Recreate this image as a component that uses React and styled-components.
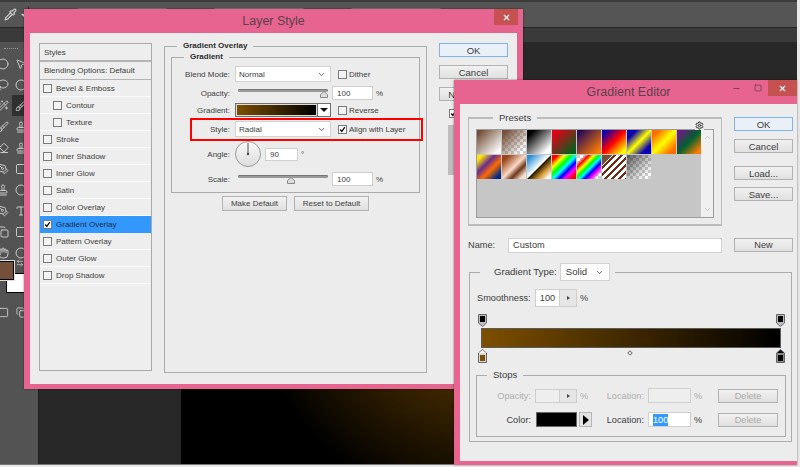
import React from "react";
import styled, { createGlobalStyle } from "styled-components";
import {
    Brush, Circle, Eraser, Hand, Lasso, MousePointer2, PenTool, Pipette,
    Settings, Square, Stamp, Type, Wand2, X, Minus, ChevronDown, ChevronUp, Copy,
    ArrowLeftRight,
} from "lucide-react";

const GlobalStyle = createGlobalStyle`
    html, body {
        margin: 0;
        padding: 0;
        background: #e9e9e9;
        overflow: hidden;
    }
    * {
        box-sizing: border-box;
    }
`

const PINK = "#e6648f";
const TEXT = "#3d3d3d";

const Screen = styled.div`
    position: relative;
    width: 800px;
    height: 467px;
    overflow: hidden;
    font-family: "Liberation Sans", Arial, sans-serif;
    font-size: 8px;
    color: ${TEXT};
`

/* photoshop behind the dialogs */
const Photoshop = styled.div`
    width: 797px;
    height: 465px;
    display: flex;
    flex-direction: column;
    background: #282828;
    border-bottom: 1px solid #777;
`

const OptionsBar = styled.div`
    height: 28px;
    flex-shrink: 0;
    display: flex;
    align-items: flex-start;
    padding: 6px 0 0 4px;
    background: #555;
    border-top: 2px solid #3c3c3c;
    border-bottom: 1px solid #262626;
    color: #d0d0d0;
`

const OptionCaret = styled.div`
    margin: 6px 0 0 4px;
    border-left: 3px solid transparent;
    border-right: 3px solid transparent;
    border-top: 3px solid #e0e0e0;
`

const OptionSeparator = styled.div`
    width: 1px;
    height: 6px;
    margin: -2px 0 0 1px;
    background: #2e2e2e;
`

const OptionField = styled.div`
    width: ${props => props.$w}px;
    margin-left: ${props => props.$ml}px;
    height: 14px;
    border: 1px solid #7d7d7d;
    border-radius: 3px;
`

const TabStrip = styled.div`
    height: 14px;
    flex-shrink: 0;
    background: #3a3a3a;
`

const Workspace = styled.div`
    flex: 1;
    display: flex;
`

const ToolPanel = styled.div`
    position: relative;
    width: 39px;
    flex-shrink: 0;
    background: #535353;
    border-right: 1px solid #1e1e1e;
    padding-top: 6px;
    overflow: hidden;
`

const Grabber = styled.div`
    width: 14px;
    height: 1px;
    margin-left: 4px;
    border-top: 1px dotted #999;
`

const ToolGrid = styled.div`
    display: grid;
    grid-template-columns: 18px 18px;
    grid-auto-rows: 21px;
    margin: 4px 0 0 -6px;
    color: #c8c8c8;
`

const ToolSlot = styled.div`
    display: flex;
    align-items: center;
    justify-content: center;
    background: ${props => props.$active ? "#2f2f2f" : "transparent"};
`

const SwapIcon = styled.div`
    position: absolute;
    left: 16px;
    top: 217px;
    display: flex;
    color: #d0d0d0;
`

const Foreground = styled.div`
    position: absolute;
    left: -3px;
    top: 219px;
    z-index: 1;
    width: 17px;
    height: 19px;
    background: #74503a;
    border: 1px solid #000;
    outline: 1px solid #ddd;
`

const Background = styled.div`
    position: absolute;
    left: 6px;
    top: 231px;
    width: 20px;
    height: 20px;
    background: #fff;
    border: 1px solid #000;
`

const ModeGrid = styled(ToolGrid)`
    margin-top: 39px;
`

const DocArea = styled.div`
    flex: 1;
    padding: 40px 0 0 142px;
    display: flex;
`

const Canvas = styled.div`
    flex: 1;
    background: radial-gradient(circle 240px at 308px 191px, #7d4f00 0%, #000 100%);
`

/* dialog chrome */
const Dialog = styled.div`
    position: absolute;
    display: flex;
    flex-direction: column;
    background: ${PINK};
    box-shadow: 0 0 2px rgba(0, 0, 0, 0.5);
`

const LayerStyleDialog = styled(Dialog)`
    left: 24px;
    top: 9px;
    width: 499px;
    height: 380px;
    padding: 0 6px 5px;
`

const GradientDialog = styled(Dialog)`
    left: 454px;
    top: 80px;
    width: 343px;
    height: 385px;
    padding: 0 0 4px 6px;
`

const TitleBar = styled.div`
    position: relative;
    height: 24px;
    flex-shrink: 0;
    display: flex;
    align-items: center;
    justify-content: center;
    font-size: 12.5px;
    color: #5f3f4c;
`

const WindowButtons = styled.div`
    position: absolute;
    right: ${props => props.$right}px;
    top: 0;
    display: flex;
    align-items: flex-start;
`

const CloseButton = styled.div`
    width: ${props => props.$w}px;
    height: 16px;
    display: flex;
    align-items: center;
    justify-content: center;
    background: #c75050;
    color: #fff;
`

const WindowGlyph = styled.div`
    width: 21px;
    height: 16px;
    display: flex;
    align-items: center;
    justify-content: center;
    color: #5c3a48;
`

const LayerBody = styled.div`
    flex: 1;
    display: flex;
    align-items: flex-start;
    padding-left: 9px;
    gap: 12px;
    background: #ececec;
`

/* styles list */
const StylesPanel = styled.div`
    width: 113px;
    height: 328px;
    margin-top: 10px;
    flex-shrink: 0;
    border: 1px solid #a9a9a9;
    background: #eeeeee;
`

const StylesHeader = styled.div`
    height: 18px;
    line-height: 17px;
    padding-left: 4px;
    border-bottom: 2px solid #b5b5b5;
`

const BlendingRow = styled.div`
    height: 18px;
    line-height: 17px;
    padding-left: 4px;
    border-bottom: 1px solid #b5b5b5;
`

const StyleRow = styled.div`
    height: 17px;
    display: flex;
    align-items: center;
    gap: 4px;
    padding-left: ${props => props.$indent ? 13 : 3}px;
    background: ${props => props.$selected ? "#3398fe" : "transparent"};
    border-bottom: 1px solid ${props => props.$selected ? "#3398fe" : "#fbfbfb"};
    color: ${props => props.$selected ? "#1c2c44" : TEXT};
`

const CheckBox = styled.div`
    width: 9px;
    height: 9px;
    flex-shrink: 0;
    display: flex;
    align-items: center;
    justify-content: center;
    background: ${props => props.$bare ? "#f3f3f3" : "#fff"};
    border: 1px solid #7a7a7a;
`

const Tick = () => (
    <svg width="9" height="9" viewBox="0 0 9 9">
        <path d="M1.5 4.5 L3.6 7 L7.5 1.5" fill="none" stroke="#111" strokeWidth="1.7" />
    </svg>
);

/* gradient overlay pane */
const EffectPane = styled.div`
    width: 263px;
    flex-shrink: 0;
    margin-top: 8px;
`

const GroupBox = styled.fieldset`
    margin: 0;
    min-width: 0;
    border: 1px solid #acacac;
`

const GroupTitle = styled.legend`
    height: 10px;
    line-height: 10px;
    padding: 0 6px;
    font-weight: ${props => props.$plain ? 400 : 700};
    color: ${props => props.$plain ? TEXT : "#2c2c2c"};
`

const OuterGroup = styled(GroupBox)`
    height: 332px;
    padding: 0 6px;
    > ${GroupTitle} {
        margin-left: 6px;
    }
`

const InnerGroup = styled(GroupBox)`
    margin-top: 1px;
    padding: 0 0 6px;
    > ${GroupTitle} {
        margin-left: 12px;
    }
`

const FormRow = styled.div`
    position: relative;
    display: flex;
    align-items: center;
    height: ${props => props.$h}px;
    margin-top: ${props => props.$mt}px;
`

const FormLabel = styled.div`
    width: 59px;
    padding-right: 1px;
    flex-shrink: 0;
    text-align: right;
`

const SelectBox = styled.div`
    width: ${props => props.$w || 96}px;
    height: ${props => props.$h || 16}px;
    margin-left: 4px;
    flex-shrink: 0;
    display: flex;
    align-items: center;
    justify-content: space-between;
    padding: 0 4px 0 3px;
    background: #fff;
    border: 1px solid #d2d2d2;
`

const SideOption = styled.div`
    display: flex;
    align-items: center;
    gap: 2px;
    margin-left: 7px;
`

const SliderTrack = styled.div`
    position: relative;
    width: 90px;
    height: 3px;
    margin: 0 3px 6px 7px;
    flex-shrink: 0;
    background: #9a9a9a;
    border-radius: 2px;
    box-shadow: inset 0 1px 0 #777;
`

const SliderThumb = styled.svg`
    position: absolute;
    top: 2px;
    left: ${props => props.$pos}%;
    margin-left: -4px;
`

const NumberInput = styled.div`
    width: ${props => props.$w}px;
    height: ${props => props.$h || 14}px;
    margin-left: ${props => props.$ml || 0}px;
    flex-shrink: 0;
    display: flex;
    align-items: center;
    padding-left: 4px;
    background: #fff;
    border: 1px solid #d0d0d0;
`

const Unit = styled.span`
    margin-left: 3px;
    color: ${props => props.$muted ? "#aaa" : TEXT};
`

const GradientField = styled.div`
    width: 96px;
    height: 14px;
    margin-left: 4px;
    flex-shrink: 0;
    display: flex;
    border: 1px solid #6f6f6f;
    background: #fff;
`

const GradientPreview = styled.div`
    flex: 1;
    background: linear-gradient(90deg, #7d4f00, #000);
    border: 1px solid #ddd;
`

const GradientArrow = styled.div`
    width: 13px;
    display: flex;
    align-items: center;
    justify-content: center;
    border-left: 1px solid #6f6f6f;
    &::after {
        content: "";
        border-left: 4px solid transparent;
        border-right: 4px solid transparent;
        border-top: 4px solid #111;
    }
`

const RedMark = styled.div`
    position: absolute;
    left: 18px;
    top: -3px;
    width: 233px;
    height: 23px;
    border: 2px solid #f00;
    pointer-events: none;
`

const AngleDial = styled.svg`
    margin-left: 4px;
    flex-shrink: 0;
`

const PaneButtons = styled.div`
    display: flex;
    justify-content: center;
    gap: 7px;
    margin-top: 3px;
`

const Button = styled.div`
    width: ${props => props.$w}px;
    height: ${props => props.$h || 14}px;
    flex-shrink: 0;
    display: flex;
    align-items: center;
    justify-content: center;
    background: ${props => props.$primary ? "#eaf0f7" : "linear-gradient(#f1f1f1, #e0e0e0)"};
    border: 1px solid ${props => props.$primary ? "#7fb4e8" : "#b2b2b2"};
    color: ${props => props.$disabled ? "#a9a9a9" : TEXT};
    font-size: inherit;
`

const ActionColumn = styled.div`
    width: 69px;
    margin-top: 10px;
    flex-shrink: 0;
    display: flex;
    flex-direction: column;
    gap: 8px;
    font-size: 9.5px;
`

const PreviewCheck = styled(CheckBox)`
    margin: 0 0 0 10px;
`

const PreviewBox = styled.div`
    width: 20px;
    height: 50px;
    margin: -1px 0 0 9px;
    background: #bdbdbd;
`

/* gradient editor */
const EditorBody = styled.div`
    flex: 1;
    padding: 9px 0 0 8px;
    background: #ececec;
    font-size: 9.2px;
`

const PresetLine = styled.div`
    display: flex;
    align-items: flex-start;
    gap: 12px;
`

const PresetGroup = styled(GroupBox)`
    position: relative;
    width: 254px;
    height: 113px;
    padding: 6px 7px 0;
    border-width: 2px 1px 2px 1px;
    border-color: #bcbcbc;
    > ${GroupTitle} {
        margin-left: 17px;
        font-size: 9.5px;
    }
`

const GearIcon = styled.div`
    position: absolute;
    right: 17px;
    top: -2px;
    display: flex;
    background: #ececec;
    color: #222;
`

const SwatchBox = styled.div`
    display: flex;
    width: 238px;
    height: 89px;
    background: #c6c6c6;
    border: 1px solid #9d9d9d;
`

const SwatchGrid = styled.div`
    width: 224px;
    display: grid;
    grid-template-columns: repeat(9, 24px);
    grid-auto-rows: 24px;
    gap: 1px;
    align-content: start;
`

const Swatch = styled.div`
    background: ${props => props.$fill};
`

const SwatchScroll = styled.div`
    flex: 1;
    display: flex;
    flex-direction: column;
    justify-content: space-between;
    align-items: center;
    padding: 3px 0;
    background: #f0f0f0;
    color: #b5b5b5;
`

const EditorActions = styled.div`
    width: 59px;
    margin-top: 4px;
    flex-shrink: 0;
    font-size: 9.5px;
    display: flex;
    flex-direction: column;
`

const ActionGap = styled.div`
    height: ${props => props.$h}px;
`

const NameRow = styled.div`
    display: flex;
    align-items: center;
    margin-top: 12px;
    height: 14px;
`

const NameLabel = styled.div`
    width: 40px;
`

const NameInput = styled.div`
    width: 214px;
    height: 15px;
    margin-right: 12px;
    padding-left: 4px;
    line-height: 13px;
    background: #fff;
    border: 1px solid #d2d2d2;
`

const TypeGroup = styled(GroupBox)`
    width: 323px;
    height: 177px;
    margin: 13px 0 0 1px;
    padding: 10px 0 0 7px;
    > ${GroupTitle} {
        display: flex;
        align-items: center;
        height: 14px;
        margin-left: 3px;
        padding: 0 5px 0 14px;
        font-size: 9.6px;
    }
`

const TypeSelect = styled(SelectBox)`
    width: 50px;
    height: 18px;
    margin-left: 3px;
    padding: 0 5px;
`

const SmoothRow = styled.div`
    display: flex;
    align-items: center;
    height: 18px;
`

const SmoothLabel = styled.div`
    width: 58px;
`

const Stepper = styled.div`
    width: 42px;
    height: ${props => props.$h}px;
    flex-shrink: 0;
    display: flex;
    background: ${props => props.$disabled ? "#eee" : "#fff"};
    border: 1px solid #cfcfcf;
`

const StepValue = styled.div`
    width: 23px;
    display: flex;
    align-items: center;
    justify-content: center;
`

const StepArrow = styled.div`
    flex: 1;
    display: flex;
    align-items: center;
    justify-content: center;
    background: #e6e6e6;
    border-left: 1px solid #cfcfcf;
    &::after {
        content: "";
        border-top: 2px solid transparent;
        border-bottom: 2px solid transparent;
        border-left: 3px solid #444;
    }
`

const RampArea = styled.div`
    position: relative;
    width: 300px;
    height: 50px;
    margin: 6px 0 0 4px;
    padding-top: 15px;
`

const Ramp = styled.div`
    height: 20px;
    background: linear-gradient(90deg, #7d4f00, #000);
    border: 1px solid #5a5a5a;
`

const StopMarker = styled.svg`
    position: absolute;
    left: ${props => props.$left}px;
    top: ${props => props.$top}px;
`

const MidPoint = styled.div`
    position: absolute;
    left: 147px;
    top: 38px;
    width: 4px;
    height: 4px;
    transform: rotate(45deg);
    border: 1px solid #777;
    background: #f4f4f4;
`

const StopsGroup = styled(GroupBox)`
    width: 310px;
    height: 67px;
    margin: 7px 0 0 -1px;
    padding: 8px 0 0;
    > ${GroupTitle} {
        margin-left: 10px;
        font-size: 9.5px;
    }
`

const StopRow = styled.div`
    display: grid;
    grid-template-columns: 58px 42px 28px 43px 43px 27px 60px;
    align-items: center;
    height: ${props => props.$h}px;
    margin-top: ${props => props.$mt || 0}px;
    color: ${props => props.$disabled ? "#adadad" : TEXT};
`

const StopLabel = styled.div`
    padding-right: 4px;
    text-align: right;
`

const ColorChip = styled.div`
    width: 41px;
    height: 15px;
    margin-left: 1px;
    background: #000;
    border: 1px solid #666;
`

const ColorArrow = styled.div`
    width: 13px;
    height: 15px;
    margin-left: 2px;
    display: flex;
    align-items: center;
    justify-content: center;
    background: #e4e4e4;
    border: 1px solid #b5b5b5;
    &::after {
        content: "";
        border-top: 5px solid transparent;
        border-bottom: 5px solid transparent;
        border-left: 6px solid #000;
    }
`

const LocationInput = styled(NumberInput)`
    width: 43px;
    height: 15px;
    padding-left: 4px;
    background: ${props => props.$disabled ? "#eee" : "#fff"};
`

const Selected = styled.span`
    background: #3399ff;
    color: #fff;
    padding: 1px 0;
`

const UnitCell = styled.div`
    padding-left: 3px;
`

const SmallChevron = () => <ChevronDown size={9} strokeWidth={2} color="#333" />;

const styleRows = [
    { label: "Bevel & Emboss" },
    { label: "Contour", indent: true },
    { label: "Texture", indent: true },
    { label: "Stroke" },
    { label: "Inner Shadow" },
    { label: "Inner Glow" },
    { label: "Satin" },
    { label: "Color Overlay" },
    { label: "Gradient Overlay", selected: true },
    { label: "Pattern Overlay" },
    { label: "Outer Glow" },
    { label: "Drop Shadow" },
];

const CHECKER = "repeating-conic-gradient(#fff 0 25%, #cfcfcf 0 50%) 0 0 / 6px 6px";

const presets = [
    { fill: "linear-gradient(135deg, #74503a 10%, #fff 90%)" },
    { fill: `linear-gradient(135deg, #74503a 10%, rgba(116, 80, 58, 0) 85%), ${CHECKER}` },
    { fill: "linear-gradient(135deg, #000 15%, #fff 85%)" },
    { fill: "linear-gradient(135deg, #e60019 10%, #00601b 90%)" },
    { fill: "linear-gradient(135deg, #290a59 10%, #ff7c00 90%)" },
    { fill: "linear-gradient(135deg, #0a00b2 10%, #ff0000 50%, #ffff00 90%)" },
    { fill: "linear-gradient(135deg, #0a00b2 20%, #ffff00 50%, #0a00b2 80%)" },
    { fill: "linear-gradient(135deg, #ff6e02 15%, #ffff00 50%, #ff6d00 85%)" },
    { fill: "linear-gradient(135deg, #6d1a80 10%, #00602f 50%, #ff7c00 90%)" },
    { fill: "linear-gradient(135deg, #fee400 12%, #6b2d8f 38%, #ff6c00 60%, #002a7f 88%)" },
    { fill: "linear-gradient(135deg, #97461a 15%, #fbd8c5 50%, #6d391a 68%, #f6e0d0 88%)" },
    { fill: "linear-gradient(135deg, #2a8fd8 10%, #fff 48%, #2a1a00 52%, #d49a30 72%, #fff 92%)" },
    { fill: "linear-gradient(135deg, #f00 12%, #ff0 26%, #0f0 40%, #0ff 52%, #00f 64%, #f0f 76%, #f00 90%)" },
    { fill: `linear-gradient(135deg, transparent 15%, #f00 25%, #ff0 36%, #0f0 46%, #0ff 55%, #00f 65%, #f0f 76%, transparent 88%), ${CHECKER}` },
    { fill: `linear-gradient(135deg, #74503a 0 22%, transparent 22%), repeating-linear-gradient(135deg, #fff 0 3px, #6b2f17 3px 5px)` },
    { fill: `linear-gradient(135deg, rgba(0, 0, 0, 0.55) 10%, rgba(0, 0, 0, 0) 85%), ${CHECKER}` },
];

const tools = [
    [Circle, MousePointer2],
    [Lasso, Circle],
    [Wand2, Brush],
    [Brush, Stamp],
    [Eraser, Stamp],
    [PenTool, Square],
    [Stamp, Circle],
    [PenTool, Type],
    [Copy, Square],
    [Hand, Circle],
];

const OpacityStop = ({ left }) => (
    <StopMarker $left={left} $top={1} width="9" height="13" viewBox="0 0 9 13">
        <path d="M0.5 0.5 H8.5 V9 L4.5 12.5 L0.5 9 Z" fill="#bdbdbd" stroke="#666" />
        <rect x="2" y="2" width="5" height="6" fill="#000" />
    </StopMarker>
);

const ColorStop = ({ left, color, active }) => (
    <StopMarker $left={left} $top={36} width="9" height="14" viewBox="0 0 9 14">
        <path d="M4.5 0.5 L8.5 4 V13.5 H0.5 V4 Z" fill={active ? "#8a8a8a" : "#d8d8d8"} stroke="#666" />
        <path d="M4.5 1 L8 4 H1 Z" fill={active ? "#000" : "#f8f8f8"} />
        <rect x="2" y="6" width="5" height="6" fill={color} />
    </StopMarker>
);

const App = () => {
    return (
        <Screen>
            <GlobalStyle />
            <Photoshop>
                <OptionsBar>
                    <Pipette size={13} color="#d6d6d6" />
                    <OptionCaret />
                    <OptionSeparator />
                    <OptionField $w={92} $ml={47} />
                    <OptionField $w={92} $ml={45} />
                    <OptionField $w={92} $ml={45} />
                </OptionsBar>
                <TabStrip />
                <Workspace>
                    <ToolPanel>
                        <Grabber />
                        <ToolGrid>
                            {tools.flat().map((Icon, i) => (
                                <ToolSlot key={i} $active={i === 5}>
                                    <Icon size={12} strokeWidth={2} />
                                </ToolSlot>
                            ))}
                        </ToolGrid>
                        <SwapIcon><ArrowLeftRight size={8} strokeWidth={2} /></SwapIcon>
                        <Foreground />
                        <Background />
                        <ModeGrid>
                            <ToolSlot><Square size={11} strokeWidth={2} /></ToolSlot>
                            <ToolSlot><Copy size={11} strokeWidth={2} /></ToolSlot>
                        </ModeGrid>
                    </ToolPanel>
                    <DocArea>
                        <Canvas />
                    </DocArea>
                </Workspace>
            </Photoshop>

            <LayerStyleDialog>
                <TitleBar>
                    Layer Style
                    <WindowButtons $right={-1}>
                        <CloseButton $w={24}>
                            <X size={9} strokeWidth={3} />
                        </CloseButton>
                    </WindowButtons>
                </TitleBar>
                <LayerBody>
                    <StylesPanel>
                        <StylesHeader>Styles</StylesHeader>
                        <BlendingRow>Blending Options: Default</BlendingRow>
                        {styleRows.map(row => (
                            <StyleRow key={row.label} $indent={row.indent} $selected={row.selected}>
                                <CheckBox $bare={!row.selected}>{row.selected && <Tick />}</CheckBox>
                                {row.label}
                            </StyleRow>
                        ))}
                    </StylesPanel>

                    <EffectPane>
                        <OuterGroup>
                            <GroupTitle>Gradient Overlay</GroupTitle>
                            <InnerGroup>
                                <GroupTitle>Gradient</GroupTitle>
                                <FormRow $h={16} $mt={4}>
                                    <FormLabel>Blend Mode:</FormLabel>
                                    <SelectBox>Normal <SmallChevron /></SelectBox>
                                    <SideOption>
                                        <CheckBox $bare />
                                        Dither
                                    </SideOption>
                                </FormRow>
                                <FormRow $h={14} $mt={4}>
                                    <FormLabel>Opacity:</FormLabel>
                                    <SliderTrack>
                                        <SliderThumb $pos={96} width="8" height="7" viewBox="0 0 8 7">
                                            <path d="M4 0.5 L7.5 3.5 V6.5 H0.5 V3.5 Z" fill="#ddd" stroke="#888" />
                                        </SliderThumb>
                                    </SliderTrack>
                                    <NumberInput $w={41} $ml={1}>100</NumberInput>
                                    <Unit>%</Unit>
                                </FormRow>
                                <FormRow $h={14} $mt={3}>
                                    <FormLabel>Gradient:</FormLabel>
                                    <GradientField>
                                        <GradientPreview />
                                        <GradientArrow />
                                    </GradientField>
                                    <SideOption>
                                        <CheckBox $bare />
                                        Reverse
                                    </SideOption>
                                </FormRow>
                                <FormRow $h={16} $mt={4}>
                                    <FormLabel>Style:</FormLabel>
                                    <SelectBox>Radial <SmallChevron /></SelectBox>
                                    <SideOption>
                                        <CheckBox><Tick /></CheckBox>
                                        Align with Layer
                                    </SideOption>
                                    <RedMark />
                                </FormRow>
                                <FormRow $h={26} $mt={4}>
                                    <FormLabel>Angle:</FormLabel>
                                    <AngleDial width="26" height="26" viewBox="0 0 26 26">
                                        <defs>
                                            <linearGradient id="dialFill" x1="0" y1="0" x2="0" y2="1">
                                                <stop offset="0" stopColor="#fafafa" />
                                                <stop offset="1" stopColor="#dcdcdc" />
                                            </linearGradient>
                                        </defs>
                                        <circle cx="13" cy="13" r="12.5" fill="url(#dialFill)" stroke="#9a9a9a" />
                                        <path d="M13 2 V13" stroke="#555" strokeWidth="1" />
                                        <circle cx="13" cy="13" r="1.2" fill="#444" />
                                    </AngleDial>
                                    <NumberInput $w={33} $h={13} $ml={4}>90</NumberInput>
                                    <Unit>°</Unit>
                                </FormRow>
                                <FormRow $h={14} $mt={5}>
                                    <FormLabel>Scale:</FormLabel>
                                    <SliderTrack>
                                        <SliderThumb $pos={59} width="8" height="7" viewBox="0 0 8 7">
                                            <path d="M4 0.5 L7.5 3.5 V6.5 H0.5 V3.5 Z" fill="#ddd" stroke="#888" />
                                        </SliderThumb>
                                    </SliderTrack>
                                    <NumberInput $w={41} $ml={1}>100</NumberInput>
                                    <Unit>%</Unit>
                                </FormRow>
                            </InnerGroup>
                            <PaneButtons>
                                <Button $w={65} $h={15}>Make Default</Button>
                                <Button $w={75} $h={15}>Reset to Default</Button>
                            </PaneButtons>
                        </OuterGroup>
                    </EffectPane>

                    <ActionColumn>
                        <Button $w={69} $primary>OK</Button>
                        <Button $w={69}>Cancel</Button>
                        <Button $w={69}>New Style...</Button>
                        <PreviewCheck><Tick /></PreviewCheck>
                        <PreviewBox />
                    </ActionColumn>
                </LayerBody>
            </LayerStyleDialog>

            <GradientDialog>
                <TitleBar>
                    Gradient Editor
                    <WindowButtons $right={0}>
                        <WindowGlyph><Minus size={9} strokeWidth={2} /></WindowGlyph>
                        <WindowGlyph><Square size={8} strokeWidth={2} /></WindowGlyph>
                        <CloseButton $w={29}>
                            <X size={9} strokeWidth={3} />
                        </CloseButton>
                    </WindowButtons>
                </TitleBar>
                <EditorBody>
                    <PresetLine>
                        <PresetGroup>
                            <GroupTitle $plain>Presets</GroupTitle>
                            <GearIcon><Settings size={9} strokeWidth={2.5} /></GearIcon>
                            <SwatchBox>
                                <SwatchGrid>
                                    {presets.map((p, i) => (
                                        <Swatch key={i} $fill={p.fill} />
                                    ))}
                                </SwatchGrid>
                                <SwatchScroll>
                                    <ChevronUp size={9} strokeWidth={2} />
                                    <ChevronDown size={9} strokeWidth={2} />
                                </SwatchScroll>
                            </SwatchBox>
                        </PresetGroup>
                        <EditorActions>
                            <Button $w={59} $primary>OK</Button>
                            <ActionGap $h={8} />
                            <Button $w={59}>Cancel</Button>
                            <ActionGap $h={13} />
                            <Button $w={59}>Load...</Button>
                            <ActionGap $h={7} />
                            <Button $w={59}>Save...</Button>
                        </EditorActions>
                    </PresetLine>

                    <NameRow>
                        <NameLabel>Name:</NameLabel>
                        <NameInput>Custom</NameInput>
                        <Button $w={59}>New</Button>
                    </NameRow>

                    <TypeGroup>
                        <GroupTitle $plain>
                            Gradient Type:
                            <TypeSelect>Solid <SmallChevron /></TypeSelect>
                        </GroupTitle>
                        <SmoothRow>
                            <SmoothLabel>Smoothness:</SmoothLabel>
                            <Stepper $h={18}>
                                <StepValue>100</StepValue>
                                <StepArrow />
                            </Stepper>
                            <Unit>%</Unit>
                        </SmoothRow>
                        <RampArea>
                            <OpacityStop left={-3} />
                            <OpacityStop left={295} />
                            <Ramp />
                            <MidPoint />
                            <ColorStop left={-3} color="#7d4f00" />
                            <ColorStop left={295} color="#000" active />
                        </RampArea>
                        <StopsGroup>
                            <GroupTitle $plain>Stops</GroupTitle>
                            <StopRow $h={14} $disabled>
                                <StopLabel>Opacity:</StopLabel>
                                <Stepper $h={14} $disabled>
                                    <StepValue />
                                    <StepArrow />
                                </Stepper>
                                <UnitCell>%</UnitCell>
                                <StopLabel>Location:</StopLabel>
                                <LocationInput $disabled />
                                <UnitCell>%</UnitCell>
                                <Button $w={60} $disabled>Delete</Button>
                            </StopRow>
                            <StopRow $h={15} $mt={10}>
                                <StopLabel>Color:</StopLabel>
                                <ColorChip />
                                <ColorArrow />
                                <StopLabel>Location:</StopLabel>
                                <LocationInput><Selected>100</Selected></LocationInput>
                                <UnitCell>%</UnitCell>
                                <Button $w={60} $disabled>Delete</Button>
                            </StopRow>
                        </StopsGroup>
                    </TypeGroup>
                </EditorBody>
            </GradientDialog>
        </Screen>
    )
}

export default App;
